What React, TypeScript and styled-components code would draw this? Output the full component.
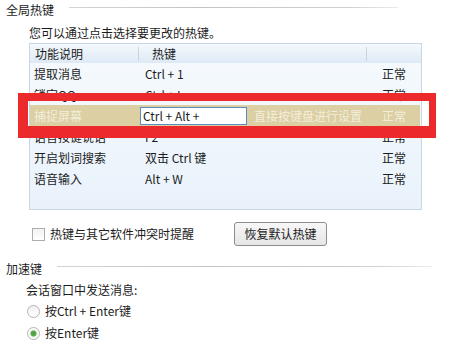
import React from "react";
import styled, { createGlobalStyle } from "styled-components";

const Global = createGlobalStyle`
  html, body { margin: 0; padding: 0; background: #ffffff; }
  body { font-family: "Noto Sans CJK SC", "Noto Sans", sans-serif; font-size: 12px; color: #1c1c1c; }
`;

const Page = styled.div`
  width: 451px;
  height: 348px;
  overflow: hidden;
  background: #ffffff;
`;

const SectionHeader = styled.div<{ $lineEnd: number; $top: number }>`
  display: flex;
  align-items: flex-start;
  height: 18px;
  margin-top: ${(p) => p.$top}px;
  padding-left: 6px;
  padding-right: ${(p) => p.$lineEnd}px;
`;

const SectionTitle = styled.span`
  line-height: 18px;
  white-space: nowrap;
`;

const SectionLine = styled.div`
  flex: 1;
  height: 1px;
  margin-top: 6px;
  margin-left: 15px;
  background: linear-gradient(to right, #d4d4d4, #c4c4c4 40%, #d0d0d0 85%, #ececec);
`;

const Desc = styled.div`
  margin: 6px 0 0 29px;
  line-height: 16px;
`;

const ListWrap = styled.div`
  position: relative;
  margin: 2px 0 0 29px;
  width: 393px;
`;

const ListBox = styled.div`
  height: 165px;
  border: 1px solid #c9d7e5;
  background: linear-gradient(to bottom, #f6fafe, #e9f2fb);
`;

const Grid = styled.div`
  display: grid;
  grid-template-columns: 108px 228px 1fr;
`;

const HeaderRow = styled(Grid)`
  height: 19px;
  background: linear-gradient(to bottom, #f4f9fd, #dde9f4);
`;

const HeaderCell = styled.div<{ $pad: number; $divider?: boolean }>`
  display: flex;
  align-items: center;
  padding-left: ${(p) => p.$pad}px;
  margin: 3px 0 2px;
  border-left: ${(p) => (p.$divider ? "1px solid #c9d3de" : "1px solid transparent")};
  line-height: 14px;
`;

const Row = styled(Grid)<{ $active?: boolean }>`
  height: 21px;
  margin: 0 1px 0 0;
  background: ${(p) => (p.$active ? "#dbcfa3" : "transparent")};
  color: ${(p) => (p.$active ? "#f3eedb" : "#1c1c1c")};
`;

const Cell = styled.div<{ $pad: number }>`
  display: flex;
  align-items: center;
  gap: 7px;
  padding-left: ${(p) => p.$pad}px;
  line-height: 21px;
  white-space: nowrap;
  overflow: hidden;
`;

const KeyInput = styled.div`
  width: 103px;
  height: 16px;
  border: 1px solid #5a8cc0;
  background: #ffffff;
  color: #1c1c1c;
  line-height: 16px;
  padding-left: 2px;
`;

const Highlight = styled.div`
  position: absolute;
  left: -11px;
  top: 50px;
  width: 418px;
  height: 45px;
  box-sizing: border-box;
  border-style: solid;
  border-color: #ec2a2c;
  border-width: 8px 7px 12px 10px;
  pointer-events: none;
`;

const OptionRow = styled.div`
  display: flex;
  align-items: center;
  height: 24px;
  margin: 12px 0 0 32px;
`;

const CheckBox = styled.span`
  width: 11px;
  height: 11px;
  border: 1px solid #adadad;
  background: linear-gradient(to bottom, #f2f2f2, #ffffff);
  margin-right: 5px;
`;

const OptionText = styled.span`
  line-height: 16px;
  white-space: nowrap;
`;

const Button = styled.button`
  margin-left: 40px;
  width: 93px;
  height: 24px;
  border: 1px solid #8d8d8d;
  border-radius: 3px;
  background: linear-gradient(to bottom, #f7f7f7, #e6e6e6);
  font: inherit;
  color: #1c1c1c;
  padding: 0;
  line-height: 22px;
`;

const SubLabel = styled.div`
  margin: 4px 0 0 26px;
  line-height: 16px;
`;

const RadioRow = styled.div<{ $top: number }>`
  display: flex;
  align-items: center;
  height: 16px;
  margin: ${(p) => p.$top}px 0 0 27px;
`;

const Radio = styled.span<{ $checked?: boolean }>`
  width: 11px;
  height: 11px;
  border-radius: 50%;
  border: 1px solid #b4b4b4;
  background: ${(p) =>
    p.$checked
      ? "radial-gradient(circle, #4f9f3f 0, #5aa84a 2.6px, #e9f2e6 3.4px, #ffffff 5px)"
      : "linear-gradient(to bottom, #f0f0f0, #ffffff)"};
  margin-right: 5px;
`;

const rows = [
  { name: "提取消息", key: "Ctrl + 1", status: "正常" },
  { name: "锁定QQ", key: "Ctrl + L", status: "正常" },
  { name: "捕捉屏幕", key: "Ctrl + Alt +", status: "正常", active: true },
  { name: "语音按键说话", key: "F2", status: "正常" },
  { name: "开启划词搜索", key: "双击 Ctrl 键", status: "正常" },
  { name: "语音输入", key: "Alt + W", status: "正常" },
];

export default function App() {
  return (
    <Page>
      <Global />
      <SectionHeader $lineEnd={53} $top={1}>
        <SectionTitle>全局热键</SectionTitle>
        <SectionLine />
      </SectionHeader>
      <Desc>您可以通过点击选择要更改的热键。</Desc>
      <ListWrap>
        <ListBox>
          <HeaderRow>
            <HeaderCell $pad={4}>功能说明</HeaderCell>
            <HeaderCell $pad={13} $divider>热键</HeaderCell>
            <HeaderCell $pad={0} $divider />
          </HeaderRow>
          {rows.map((r) => (
            <Row key={r.name} $active={r.active}>
              <Cell $pad={4}>{r.name}</Cell>
              {r.active ? (
                <Cell $pad={2}>
                  <KeyInput>{r.key}</KeyInput>
                  直接按键盘进行设置
                </Cell>
              ) : (
                <Cell $pad={7}>{r.key}</Cell>
              )}
              <Cell $pad={16}>{r.status}</Cell>
            </Row>
          ))}
        </ListBox>
        <Highlight />
      </ListWrap>
      <OptionRow>
        <CheckBox />
        <OptionText>热键与其它软件冲突时提醒</OptionText>
        <Button>恢复默认热键</Button>
      </OptionRow>
      <SectionHeader $lineEnd={19} $top={14}>
        <SectionTitle>加速键</SectionTitle>
        <SectionLine />
      </SectionHeader>
      <SubLabel>会话窗口中发送消息:</SubLabel>
      <RadioRow $top={5}>
        <Radio />
        <OptionText>按Ctrl + Enter键</OptionText>
      </RadioRow>
      <RadioRow $top={6}>
        <Radio $checked />
        <OptionText>按Enter键</OptionText>
      </RadioRow>
    </Page>
  );
}
